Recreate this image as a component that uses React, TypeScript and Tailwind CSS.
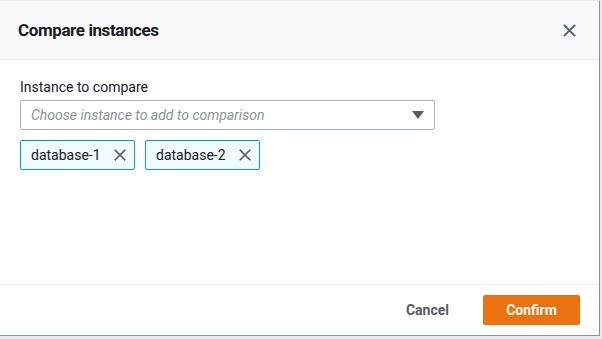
import React from "react";

const XIcon = ({ size = 14, className = "" }: { size?: number; className?: string }) => (
  <svg width={size} height={size} viewBox="0 0 16 16" className={className} fill="none">
    <path d="M2 2 L14 14 M14 2 L2 14" stroke="currentColor" strokeWidth="2" />
  </svg>
);

const Token = ({ label }: { label: string }) => (
  <div className="flex items-center h-[30px] w-[115px] border border-[#00a1c9] bg-[#f1faff] rounded-[2px] pl-[10px] pr-[7px] justify-between">
    <span className="text-[14px] text-[#16191f]">{label}</span>
    <XIcon size={14} className="text-[#545b64]" />
  </div>
);

export default function App() {
  return (
    <div className="w-[602px] h-[339px] bg-[#eaeded] overflow-hidden" style={{ fontFamily: "Roboto, 'Liberation Sans', sans-serif" }}>
      <div className="w-[600px] h-[336px] bg-white border-r border-b border-[#879596] border-t border-t-[#eaeded] flex flex-col">
        <div className="h-[59px] shrink-0 bg-[#fafafa] border-b border-[#eaeded] flex items-center justify-between pl-[18px] pr-[22px]">
          <h2 className="text-[17px] font-bold text-[#16191f] leading-[22px] tracking-[-0.4px]">Compare instances</h2>
          <XIcon size={15} className="text-[#545b64]" />
        </div>
        <div className="flex-1 px-[20px] pt-[17px]">
          <div className="text-[14px] text-[#16191f] leading-[20px]">Instance to compare</div>
          <div className="mt-[3px] w-[415px] h-[30px] border border-[#aab7b8] rounded-[2px] flex items-center justify-between pl-[10px] pr-[10px]">
            <span className="text-[14px] italic text-[#879596]">Choose instance to add to comparison</span>
            <svg width="12" height="8" viewBox="0 0 12 8">
              <path d="M0 0 H12 L6 8 Z" fill="#545b64" />
            </svg>
          </div>
          <div className="mt-[10px] flex gap-[10px]">
            <Token label="database-1" />
            <Token label="database-2" />
          </div>
        </div>
        <div className="h-[51px] shrink-0 border-t border-[#eaeded] flex items-center justify-end pr-[19px] gap-[34px]">
          <span className="text-[14px] font-bold text-[#545b64]">Cancel</span>
          <button className="w-[97px] h-[30px] bg-[#ec7211] rounded-[2px] text-white text-[14px] font-bold">Confirm</button>
        </div>
      </div>
    </div>
  );
}
